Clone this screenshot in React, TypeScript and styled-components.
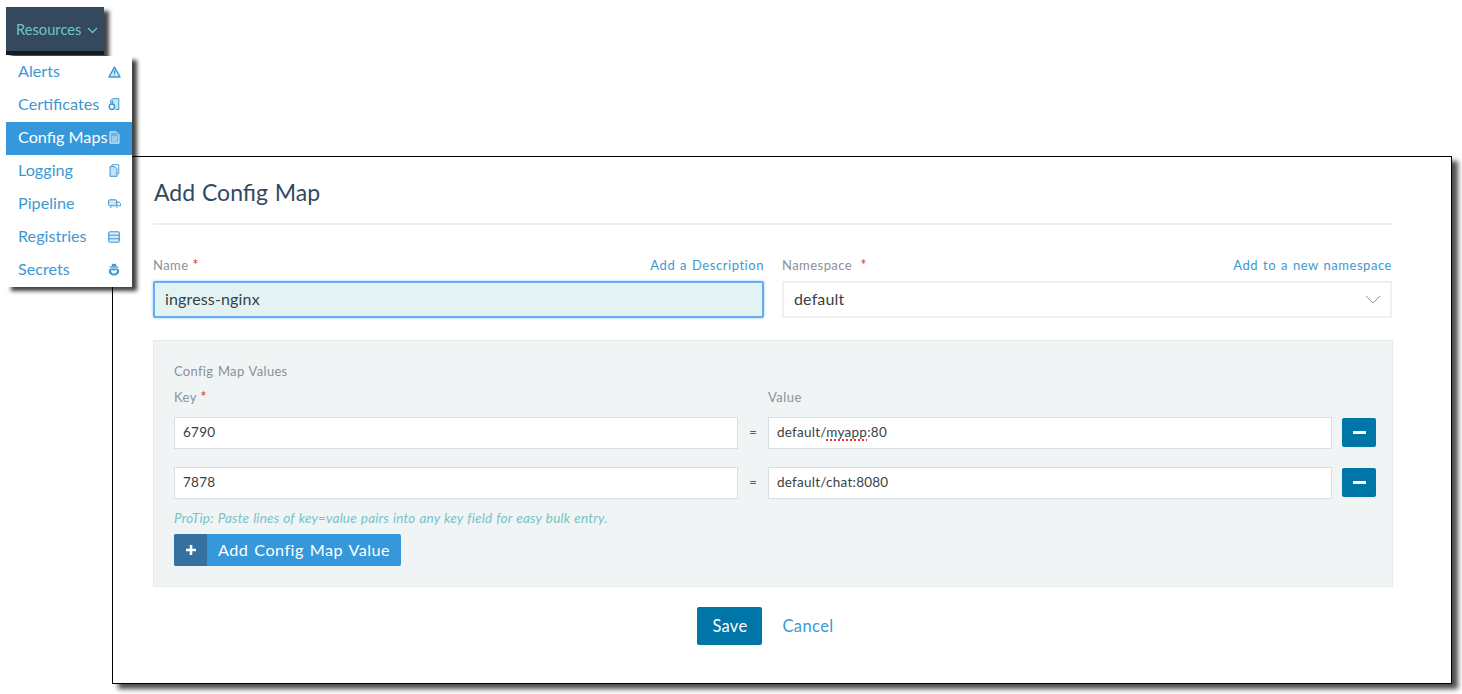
import React, { FC } from "react";
import styled, { createGlobalStyle } from "styled-components";

const GlobalStyle = createGlobalStyle`
  html, body {
    margin: 0;
    padding: 0;
    background: #ffffff;
  }
  body {
    width: 1462px;
    height: 694px;
    overflow: hidden;
    font-family: "Lato", "Open Sans", sans-serif;
  }
  * {
    box-sizing: border-box;
  }
`;

const menuItems = [
  { label: "Alerts", icon: "alert" },
  { label: "Certificates", icon: "cert" },
  { label: "Config Maps", icon: "file", active: true },
  { label: "Logging", icon: "copy" },
  { label: "Pipeline", icon: "truck" },
  { label: "Registries", icon: "registry" },
  { label: "Secrets", icon: "spy" },
];

const MenuIcon: FC<{ name: string }> = ({ name }) => {
  switch (name) {
    case "alert":
      return (
        <svg width="13" height="12" viewBox="0 0 13 12">
          <path d="M6.5 1.2 12 11H1z" fill="currentColor" fillOpacity=".2" stroke="currentColor" strokeWidth="1.5" strokeLinejoin="round" />
          <path d="M6.5 4.2v3.5M6.5 8.4v1.2" stroke="currentColor" strokeWidth="1.4" />
        </svg>
      );
    case "cert":
      return (
        <svg width="12" height="13" viewBox="0 0 12 13">
          <path d="M2.6 5V2.6L5 .7h5.8v10.8H7.6" fill="currentColor" fillOpacity=".25" stroke="currentColor" strokeWidth="1" />
          <circle cx="3.9" cy="8.8" r="2.7" fill="#ffffff" stroke="currentColor" strokeWidth="1.5" />
          <path d="M3 5.4 5.2 1.4v4z" fill="currentColor" />
        </svg>
      );
    case "file":
      return (
        <svg width="11" height="13" viewBox="0 0 11 13">
          <path d="M1 .8h6l3 3v8.4H1z" fill="currentColor" fillOpacity=".35" stroke="currentColor" strokeWidth="1" />
          <path d="M3 6h5M3 8h5M3 10h5" stroke="currentColor" strokeWidth=".8" />
        </svg>
      );
    case "copy":
      return (
        <svg width="11" height="13" viewBox="0 0 11 13">
          <path d="M3 2.5V.7h6.8v9H8" fill="none" stroke="currentColor" strokeWidth=".9" />
          <path d="M1 2.6h5l2 2v7.7H1z" fill="currentColor" fillOpacity=".3" stroke="currentColor" strokeWidth="1" />
        </svg>
      );
    case "truck":
      return (
        <svg width="13" height="9" viewBox="0 0 13 9">
          <rect x=".6" y=".8" width="8" height="6" rx="1" fill="currentColor" fillOpacity=".25" stroke="currentColor" strokeWidth="1" />
          <path d="M8.8 3h2.2l1.4 1.5v2.3H8.8z" fill="none" stroke="currentColor" strokeWidth="1" />
          <path d="M2 8.2h1.5M8 8.2h1.5" stroke="currentColor" strokeWidth="1" />
        </svg>
      );
    case "registry":
      return (
        <svg width="12" height="12" viewBox="0 0 12 12">
          <rect x=".7" y=".7" width="10.6" height="10.6" rx="1.6" fill="currentColor" fillOpacity=".2" stroke="currentColor" strokeWidth="1.1" />
          <path d="M.7 4.2h10.6M.7 7.8h10.6" stroke="currentColor" strokeWidth="1.1" />
        </svg>
      );
    default:
      return (
        <svg width="12" height="13" viewBox="0 0 12 13">
          <path d="M3.4 3.4 4.2.6 6 1.2 7.8.6l.8 2.8z" fill="currentColor" />
          <rect x="1.6" y="3.5" width="8.8" height="1.2" fill="currentColor" />
          <path d="M.8 8c0-1.7 1.1-2.6 2.2-2.6h6c1.1 0 2.2.9 2.2 2.6 0 2.8-2.4 4.5-5.2 4.5S.8 10.8.8 8z" fill="currentColor" />
          <path d="M3 7.200h2.300L6 8.200l.7-1H9c0 1.900-1.300 3.400-3 3.400S3 9.100 3 7.200z" fill="#ffffff" />
        </svg>
      );
  }
};

const App: FC = () => (
  <>
    <GlobalStyle />
    <NavButton>
      <NavLabel>
        Resources
        <svg width="11" height="7" viewBox="0 0 11 7">
          <path d="M1 1l4.500 4.500L10 1" fill="none" stroke="currentColor" strokeWidth="1.3" />
        </svg>
      </NavLabel>
      <NavEdge />
    </NavButton>

    <Dialog>
      <Title>Add Config Map</Title>
      <Divider />
      <TopRow>
        <Column>
          <LabelRow>
            <Label>
              Name <Star>*</Star>
            </Label>
            <TextLink>Add a Description</TextLink>
          </LabelRow>
          <BigField focused>ingress-nginx</BigField>
        </Column>
        <Column>
          <LabelRow>
            <Label>
              Namespace <Star>&nbsp;*</Star>
            </Label>
            <TextLink>Add to a new namespace</TextLink>
          </LabelRow>
          <BigField>
            default
            <Caret width="16" height="9" viewBox="0 0 16 9">
              <path d="M1 1l7 7 7-7" fill="none" stroke="#8f9599" strokeWidth="1" />
            </Caret>
          </BigField>
        </Column>
      </TopRow>

      <ValuesPanel>
        <PanelTitle>Config Map Values</PanelTitle>
        <HeadRow>
          <Label>
            Key <Star>*</Star>
          </Label>
          <span />
          <Label>Value</Label>
        </HeadRow>
        <ValueRow>
          <SmallField>6790</SmallField>
          <Equals>=</Equals>
          <SmallField>
            default/<Misspelled>myapp</Misspelled>:80
          </SmallField>
          <MinusButton>
            <i />
          </MinusButton>
        </ValueRow>
        <ValueRow>
          <SmallField>7878</SmallField>
          <Equals>=</Equals>
          <SmallField>default/chat:8080</SmallField>
          <MinusButton>
            <i />
          </MinusButton>
        </ValueRow>
        <ProTip>ProTip: Paste lines of key=value pairs into any key field for easy bulk entry.</ProTip>
        <AddButton>
          <AddIcon>
            <svg width="12" height="12" viewBox="0 0 12 12">
              <path d="M6 1v10M1 6h10" stroke="#ffffff" strokeWidth="2.6" />
            </svg>
          </AddIcon>
          <AddText>Add Config Map Value</AddText>
        </AddButton>
      </ValuesPanel>

      <Actions>
        <SaveButton>Save</SaveButton>
        <CancelLink>Cancel</CancelLink>
      </Actions>
    </Dialog>

    <Menu>
      {menuItems.map(({ label, icon, active }) => (
        <MenuItem key={label} active={!!active}>
          {label}
          <IconSlot active={!!active}>
            <MenuIcon name={icon} />
          </IconSlot>
        </MenuItem>
      ))}
    </Menu>
  </>
);

export default App;

const NavButton = styled.div`
  position: absolute;
  left: 6px;
  top: 7px;
  width: 98px;
  height: 48px;
  background: #34495e;
  display: flex;
  flex-direction: column;
  box-shadow: 5px 4px 4px rgba(0, 0, 0, 0.75);
`;

const NavLabel = styled.div`
  flex: 1;
  display: flex;
  align-items: center;
  gap: 6px;
  padding-left: 10px;
  padding-bottom: 1px;
  color: #6fc4c9;
  font-size: 14.7px;
  svg {
    margin-top: 3px;
  }
`;

const NavEdge = styled.div`
  height: 4px;
  background: #141c24;
`;

const Menu = styled.div`
  position: absolute;
  left: 6px;
  top: 56px;
  width: 126px;
  height: 231px;
  background: #ffffff;
  box-shadow: 5px 4px 4px rgba(0, 0, 0, 0.75);
`;

const MenuItem = styled.div<{ active: boolean }>`
  height: 33px;
  display: flex;
  align-items: center;
  justify-content: space-between;
  padding: 0 11px 4px 12px;
  font-size: 16.2px;
  white-space: nowrap;
  color: ${(p) => (p.active ? "#ffffff" : "#3d98d3")};
  background: ${(p) => (p.active ? "#3498db" : "transparent")};
`;

const IconSlot = styled.span<{ active: boolean }>`
  display: flex;
  width: 14px;
  flex-shrink: 0;
  justify-content: center;
  margin: 2px 0 0 -4px;
  color: ${(p) => (p.active ? "#dcecf7" : "#3d98d3")};
`;

const Dialog = styled.div`
  position: absolute;
  left: 112px;
  top: 156px;
  width: 1340px;
  height: 528px;
  background: #ffffff;
  border: 1px solid #000000;
  box-shadow: 6px 5px 5px rgba(0, 0, 0, 0.7);
  padding: 0 59px 0 40px;
`;

const Title = styled.h1`
  margin: 19px 0 0 1px;
  height: 33px;
  line-height: 33px;
  font-size: 23px;
  font-weight: 400;
  word-spacing: 1px;
  color: #34495e;
`;

const Divider = styled.div`
  height: 2px;
  margin-top: 14px;
  background: #ebefef;
`;

const TopRow = styled.div`
  display: grid;
  grid-template-columns: 611px 610px;
  gap: 18px;
  margin-top: 30px;
`;

const Column = styled.div`
  display: flex;
  flex-direction: column;
`;

const LabelRow = styled.div`
  display: flex;
  justify-content: space-between;
  align-items: center;
  height: 20px;
  margin-bottom: 6px;
`;

const Label = styled.span`
  font-size: 13px;
  letter-spacing: 0.45px;
  color: #8b9195;
`;

const Star = styled.span`
  font-size: 15px;
  line-height: 13px;
  color: #e8303a;
`;

const TextLink = styled.span`
  font-size: 13px;
  letter-spacing: 0.55px;
  word-spacing: 1px;
  color: #3d98d3;
`;

const BigField = styled.div<{ focused?: boolean }>`
  height: 37px;
  display: flex;
  align-items: center;
  justify-content: space-between;
  padding: 0 10px 2px;
  font-size: 16px;
  letter-spacing: 0.15px;
  color: #3a3f44;
  background: ${(p) => (p.focused ? "#e3f3f3" : "#ffffff")};
  border: ${(p) => (p.focused ? "2px solid #64aef2" : "2px solid #edf1f1")};
  border-radius: ${(p) => (p.focused ? "2px" : "0")};
  box-shadow: ${(p) => (p.focused ? "0 0 3px rgba(100, 174, 242, 0.7)" : "none")};
`;

const Caret = styled.svg`
  margin: 2px -1px 0 0;
`;

const ValuesPanel = styled.div`
  margin-top: 22px;
  width: 1240px;
  height: 247px;
  background: #f1f4f5;
  border: 1px solid #e6eaec;
  padding: 21px 16px 0 20px;
`;

const PanelTitle = styled.div`
  height: 18px;
  line-height: 18px;
  font-size: 13px;
  letter-spacing: 0.3px;
  word-spacing: 1px;
  color: #8b9195;
`;

const HeadRow = styled.div`
  display: grid;
  grid-template-columns: 564px 30px 564px;
  height: 20px;
  margin-top: 7px;
  align-items: center;
`;

const ValueRow = styled.div`
  display: grid;
  grid-template-columns: 564px 30px 564px 34px;
  height: 32px;
  margin-top: 10px;
  margin-bottom: 8px;

  & + & {
    margin-top: 18px;
    margin-bottom: 0;
  }
`;

const SmallField = styled.div`
  height: 32px;
  line-height: 29px;
  padding: 0 8px;
  font-size: 13.5px;
  letter-spacing: 0.25px;
  color: #3a3f44;
  background: #ffffff;
  border: 1px solid #d9dfe1;
  white-space: pre;
`;

const Misspelled = styled.span`
  text-decoration: underline dotted #e8303a 2px;
  text-underline-offset: 2px;
`;

const Equals = styled.span`
  text-align: center;
  line-height: 30px;
  font-size: 13px;
  color: #555b60;
`;

const MinusButton = styled.div`
  width: 34px;
  height: 29px;
  margin: 1px 0 0 10px;
  display: flex;
  align-items: center;
  justify-content: center;
  border-radius: 2px;
  background: #0075a8;

  i {
    display: block;
    width: 13px;
    height: 3px;
    background: #ffffff;
  }
`;

const ProTip = styled.div`
  margin-top: 10px;
  height: 18px;
  line-height: 18px;
  font-size: 13.5px;
  font-style: italic;
  letter-spacing: 0.2px;
  word-spacing: 0.6px;
  color: #75c3c7;
`;

const AddButton = styled.div`
  margin-top: 7px;
  width: 227px;
  height: 32px;
  display: flex;
  border-radius: 2px;
  overflow: hidden;
  background: #3498db;
`;

const AddIcon = styled.span`
  width: 33px;
  display: flex;
  align-items: center;
  justify-content: center;
  background: #34719f;
`;

const AddText = styled.span`
  padding-left: 11px;
  line-height: 31px;
  font-size: 16.2px;
  letter-spacing: 0.45px;
  word-spacing: 1.5px;
  color: #ffffff;
`;

const Actions = styled.div`
  display: flex;
  justify-content: center;
  align-items: center;
  gap: 20px;
  margin-top: 20px;
  margin-right: 14px;
`;

const SaveButton = styled.div`
  width: 65px;
  height: 38px;
  line-height: 38px;
  text-align: center;
  border-radius: 2px;
  font-size: 16.5px;
  letter-spacing: 0.3px;
  color: #ffffff;
  background: #0075a8;
`;

const CancelLink = styled.span`
  font-size: 16.5px;
  letter-spacing: 0.4px;
  color: #3d98d3;
`;
